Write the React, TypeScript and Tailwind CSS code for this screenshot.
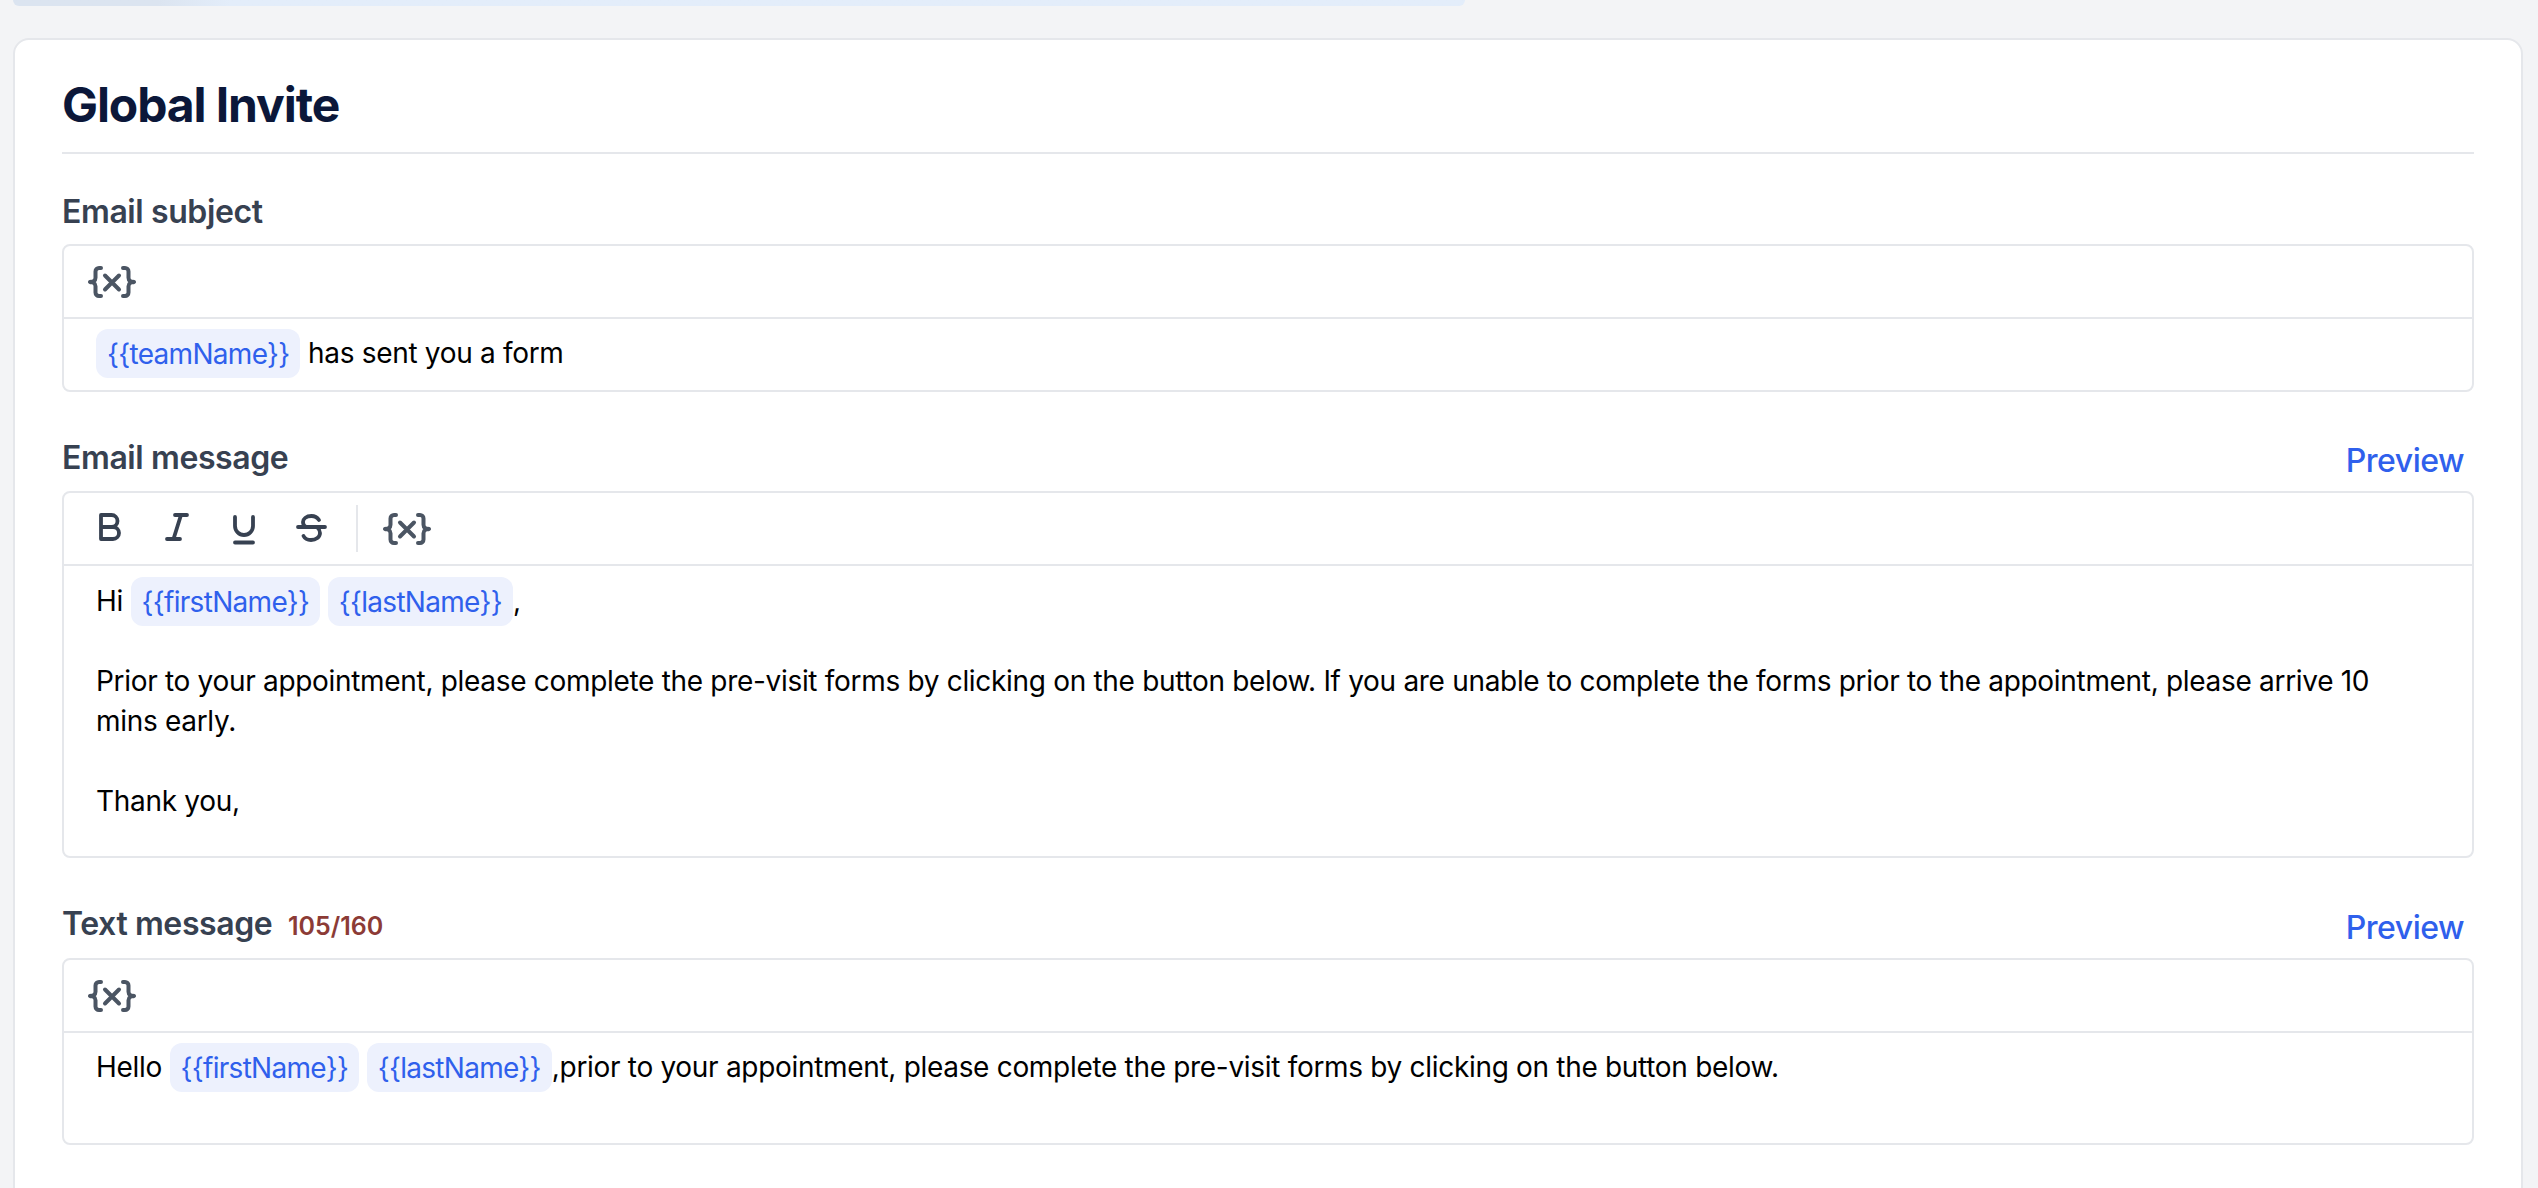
function VariableIcon() {
  return (
    <svg width="48" height="32" viewBox="0 0 48 32" fill="none" stroke="currentColor" strokeWidth="4" strokeLinecap="round" strokeLinejoin="round" className="text-[#4b5563]">
      <path d="M13 2h-2a3.500 3.500 0 0 0-3.500 3.500v6a4.500 4.500 0 0 1-5.500 4.500a4.500 4.500 0 0 1 5.500 4.500v6a3.500 3.500 0 0 0 3.500 3.500h2" />
      <path d="M35 2h2a3.500 3.500 0 0 1 3.500 3.500v6a4.500 4.500 0 0 0 5.500 4.500a4.500 4.500 0 0 0-5.500 4.500v6a3.500 3.500 0 0 1-3.500 3.500h-2" />
      <path d="M17 9.500l14 14M31 9.500l-14 14" />
    </svg>
  );
}

function FormatIcon({ d }: { d: string }) {
  return (
    <svg width="40" height="40" viewBox="0 0 40 40" fill="none" stroke="currentColor" strokeWidth="3.8" strokeLinecap="round" strokeLinejoin="round">
      <path d={d} />
    </svg>
  );
}

function Chip({ children }: { children: string }) {
  return <span className="rounded-xl bg-[#edf1fd] px-[11px] py-[7.5px] tracking-[-0.7px] text-[#2f60ec]">{children}</span>;
}

function Label({ children }: { children: React.ReactNode }) {
  return <label className="block text-[32px] leading-[40px] font-semibold tracking-[-0.4px] text-[#374151]">{children}</label>;
}

function Preview() {
  return <button className="mt-[6px] mr-[10px] text-[32px] leading-[40px] font-medium tracking-[-0.5px] text-[#2f60ec]">Preview</button>;
}

function Toolbar({ children }: { children: React.ReactNode }) {
  return <div className="flex h-[73px] items-center border-b-2 border-[#e5e7eb] pl-[24px] text-[#374151]">{children}</div>;
}

export default function App() {
  return (
    <div className="h-[1188px] overflow-hidden bg-[#f3f4f6] font-['Inter',sans-serif] text-[28px] leading-[40px] tracking-[-0.31px] text-black antialiased">
      <div className="ml-[13px] h-[6px] w-[1452px] rounded-b-xl bg-gradient-to-r from-[#dbe4f0] from-10% to-[#e3edfa] to-15%" />

      <div className="mt-[32px] mr-[15px] ml-[13px] h-[1300px] rounded-2xl border-2 border-[#e5e7eb] bg-white px-[47px]">
        <div className="border-b-2 border-[#e5e7eb] pt-[33px] pb-[15px]">
          <h1 className="text-[48px] leading-[64px] font-bold tracking-[-1.1px] text-[#0b1739]">Global Invite</h1>
        </div>

        <div className="mt-[38px]">
          <Label>Email subject</Label>
          <div className="mt-[12px] h-[148px] rounded-lg border-2 border-[#e5e7eb]">
            <Toolbar>
              <VariableIcon />
            </Toolbar>
            <div className="px-[32px] pt-[14px]">
              <Chip>{'{{teamName}}'}</Chip> has sent you a form
            </div>
          </div>
        </div>

        <div className="mt-[46px]">
          <div className="flex h-[40px] items-center justify-between">
            <Label>Email message</Label>
            <Preview />
          </div>
          <div className="mt-[13px] h-[367px] rounded-lg border-2 border-[#e5e7eb]">
            <Toolbar>
              <div className="ml-[2px] flex items-center gap-[27px]">
                <FormatIcon d="M11 6h10.500a6 6 0 0 1 0 12h-10.500zM11 18h12a6 6 0 0 1 0 12h-12z" />
                <FormatIcon d="M18 6h12M10 30h13M24 6l-7.500 24" />
                <FormatIcon d="M11 8v9a9 9 0 0 0 18 0v-9M11 33.500h18" />
                <FormatIcon d="M7 18h27M28 11C26 8 23 7 20.500 7C15 7 12 10 12 13C12 15 13 17 15 18M26 18C28 20 29 22 29 24C29 28 25 31 20 31C16 31 13.500 29 12.500 27" />
              </div>
              <div className="mr-[25px] ml-[25px] h-[47px] w-[2px] bg-[#e5e7eb]" />
              <VariableIcon />
            </Toolbar>
            <div className="px-[32px] pt-[15px]">
              <p>
                Hi <Chip>{'{{firstName}}'}</Chip> <Chip>{'{{lastName}}'}</Chip>,
              </p>
              <p className="mt-[40px] pr-[20px]">
                Prior to your appointment, please complete the pre-visit forms by clicking on the button below. If you are unable to complete the forms prior to the appointment, please arrive 10 mins early.
              </p>
              <p className="mt-[40px]">Thank you,</p>
            </div>
          </div>
        </div>

        <div className="mt-[47px]">
          <div className="flex h-[40px] items-center justify-between">
            <Label>
              Text message <span className="ml-[8px] text-[25px] tracking-normal text-[#8c3b36]">105/160</span>
            </Label>
            <Preview />
          </div>
          <div className="mt-[13px] h-[187px] rounded-lg border-2 border-[#e5e7eb]">
            <Toolbar>
              <VariableIcon />
            </Toolbar>
            <div className="px-[32px] pt-[14px]">
              Hello <Chip>{'{{firstName}}'}</Chip> <Chip>{'{{lastName}}'}</Chip>,prior to your appointment, please complete the pre-visit forms by clicking on the button below.
            </div>
          </div>
        </div>
      </div>
    </div>
  );
}
